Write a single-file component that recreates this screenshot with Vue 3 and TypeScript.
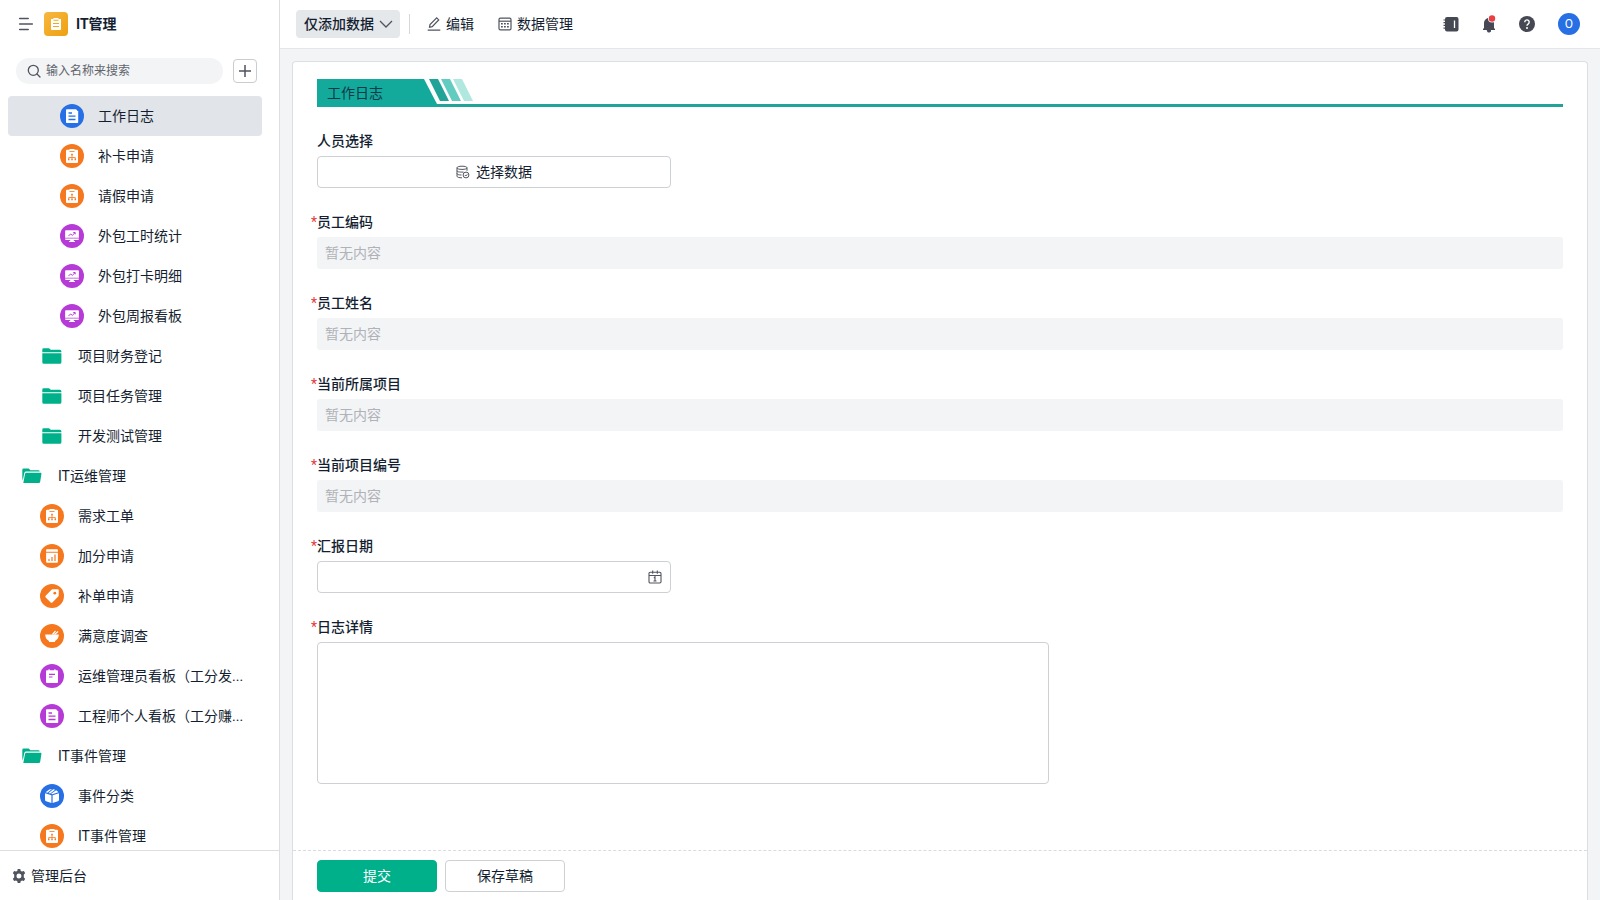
<script setup lang="ts">
import { ref } from 'vue'

interface NavItem {
  label: string
  icon: string
  tone: 'blue' | 'orange' | 'purple' | 'folder'
  level: 1 | 2 | 3
}

interface ReadonlyField {
  id: string
  label: string
}

const navItems: NavItem[] = [
  { label: '工作日志', icon: 'doc', tone: 'blue', level: 3 },
  { label: '补卡申请', icon: 'board', tone: 'orange', level: 3 },
  { label: '请假申请', icon: 'board', tone: 'orange', level: 3 },
  { label: '外包工时统计', icon: 'monitor', tone: 'purple', level: 3 },
  { label: '外包打卡明细', icon: 'monitor', tone: 'purple', level: 3 },
  { label: '外包周报看板', icon: 'monitor', tone: 'purple', level: 3 },
  { label: '项目财务登记', icon: 'folder', tone: 'folder', level: 2 },
  { label: '项目任务管理', icon: 'folder', tone: 'folder', level: 2 },
  { label: '开发测试管理', icon: 'folder', tone: 'folder', level: 2 },
  { label: 'IT运维管理', icon: 'folder-open', tone: 'folder', level: 1 },
  { label: '需求工单', icon: 'board', tone: 'orange', level: 2 },
  { label: '加分申请', icon: 'chart', tone: 'orange', level: 2 },
  { label: '补单申请', icon: 'tag', tone: 'orange', level: 2 },
  { label: '满意度调查', icon: 'bowl', tone: 'orange', level: 2 },
  { label: '运维管理员看板（工分发...', icon: 'note', tone: 'purple', level: 2 },
  { label: '工程师个人看板（工分赚...', icon: 'doc', tone: 'purple', level: 2 },
  { label: 'IT事件管理', icon: 'folder-open', tone: 'folder', level: 1 },
  { label: '事件分类', icon: 'box', tone: 'blue', level: 2 },
  { label: 'IT事件管理', icon: 'board', tone: 'orange', level: 2 },
]

const readonlyFields: ReadonlyField[] = [
  { id: 'employee-code', label: '员工编码' },
  { id: 'employee-name', label: '员工姓名' },
  { id: 'current-project', label: '当前所属项目' },
  { id: 'project-number', label: '当前项目编号' },
]

const activeIndex = ref(0)
const keyword = ref('')
const mode = ref('add')
const reportDate = ref('')
const detail = ref('')
</script>

<template>
  <div class="app">
    <svg class="sprite" aria-hidden="true">
      <symbol id="doc" viewBox="0 0 24 24">
        <path fill="#fff" d="M6.800 5.200h9.200L18.200 7.400v10.800a.8.800 0 0 1-.8.800H6.800a.8.800 0 0 1-.8-.800V6a.8.800 0 0 1 .8-.8z" />
        <path class="cut" d="M8.500 9h3.500M8.500 12.200h7M8.500 15.500h7" stroke-width="1.300" fill="none" />
      </symbol>
      <symbol id="board" viewBox="0 0 24 24">
        <path fill="#fff" d="M7 5.800h2.500V5h5v.8H17a1 1 0 0 1 1 1V18a1 1 0 0 1-1 1H7a1 1 0 0 1-1-1V6.800a1 1 0 0 1 1-1z" />
        <path class="cut" d="M9.500 7.500h5M12 10.500v3M8.700 15v-1.500h6.600V15M12 13.500V15" stroke-width="0.800" fill="none" />
        <path class="cut-fill" d="M11.200 9.700h1.600v1.600h-1.600zM8 14.700h1.500v1.500H8zM11.250 14.700h1.500v1.500h-1.500zM14.500 14.700H16v1.500h-1.500z" />
      </symbol>
      <symbol id="monitor" viewBox="0 0 24 24">
        <path fill="#fff" d="M6 6.200h12a.9.900 0 0 1 .9.900V13.800H5.100V7.100A.9.900 0 0 1 6 6.200zM5.100 14.600h13.800v.5a.9.900 0 0 1-.9.900h-4.200v1h1.200v1H9v-1h1.200v-1H6a.9.900 0 0 1-.9-.900z" />
        <path class="cut" d="M8.500 12l2-2 1.800 1.300L15 8.700M13.300 8.500h1.900v1.900" stroke-width="1" fill="none" />
      </symbol>
      <symbol id="chart" viewBox="0 0 24 24">
        <path fill="#fff" d="M7 5.200h10a.9.900 0 0 1 .9.900v1.600H6.100V6.100a.9.900 0 0 1 .9-.900zM6.100 8.700h11.800v9a1 1 0 0 1-1 1H7.100a1 1 0 0 1-1-1z" />
        <path class="cut" d="M9 15v2M12 13v4M15 10.500V17" stroke-width="1.200" fill="none" />
      </symbol>
      <symbol id="tag" viewBox="0 0 24 24">
        <path fill="#fff" d="M12.500 5.300l5-.1a1.200 1.200 0 0 1 1.300 1.300l-.1 5a1.500 1.500 0 0 1-.5 1.100l-5.800 5.800a1.200 1.200 0 0 1-1.700 0l-5-5a1.200 1.200 0 0 1 0-1.700l5.800-5.900a1.500 1.500 0 0 1 1-.500z" />
        <circle class="cut-fill" cx="14.800" cy="9.200" r="1.400" />
      </symbol>
      <symbol id="bowl" viewBox="0 0 24 24">
        <path fill="#fff" d="M5.200 10.500h13.600c0 3-1.300 5.200-3.800 6.500v1H9v-1c-2.500-1.300-3.800-3.500-3.800-6.500z" />
        <path stroke="#fff" d="M12.500 10.500l3-3.700M14.500 10.500l3.500-3" stroke-width="1.200" fill="none" />
      </symbol>
      <symbol id="note" viewBox="0 0 24 24">
        <path fill="#fff" d="M7 6.200h1.500V5.200h1.200v1h4.600v-1h1.200v1H17a1 1 0 0 1 1 1V18a1 1 0 0 1-1 1H7a1 1 0 0 1-1-1V7.200a1 1 0 0 1 1-1z" />
        <path class="cut" d="M9 10.300h6M9 13h3.500" stroke-width="1.200" fill="none" />
      </symbol>
      <symbol id="box" viewBox="0 0 24 24">
        <path fill="#fff" d="M5 9.300l6.400 1.900v7.800l-5.300-1.800A1.500 1.500 0 0 1 5 15.800zM19 9.300l-6.400 1.900v7.800l5.300-1.800a1.500 1.500 0 0 0 1.100-1.400zM5.600 8.200L9.300 5.500l2.700-.5-4.600 3.700zM13.200 5.200l2 .5-5 3.700-1.700-.4zM16.200 6.200l2.300 2L12.200 10.200l-1.100-.4z" />
      </symbol>
      <symbol id="folder" viewBox="0 0 20 16">
        <path fill="#00b08b" d="M1.700.2H7l1.700 1.600h9.100a1.600 1.600 0 0 1 1.600 1.600v.8H.3V1.600A1.400 1.400 0 0 1 1.700.2zM.3 5.200h19.100v9a1.500 1.500 0 0 1-1.500 1.500H1.800a1.500 1.500 0 0 1-1.500-1.500z" />
      </symbol>
      <symbol id="folder-open" viewBox="0 0 20 16">
        <path fill="#00b08b" d="M1.700.5h5L8.400 2.200h7.900a1.400 1.400 0 0 1 1.400 1.400H4.200a2 2 0 0 0-1.900 1.400L.8 12.400.3 10V1.900A1.400 1.400 0 0 1 1.700.5zM4.300 4.800h14.200a.9.900 0 0 1 .9 1.100l-1.200 7.800a1.500 1.500 0 0 1-1.500 1.300H1.300l1.700-9.100a1.400 1.400 0 0 1 1.300-1.100z" />
      </symbol>
    </svg>

    <aside class="sidebar">
      <div class="brand">
        <button class="plain" type="button" aria-label="收起菜单">
          <svg width="16" height="16" viewBox="0 0 16 16" fill="none" stroke="#50545f" stroke-width="1.600" stroke-linecap="round">
            <path d="M1.700 2.500h8.500M1.700 8h12.600M1.700 13.500h8.500" />
          </svg>
        </button>
        <span class="brand-icon">
          <svg width="24" height="24" viewBox="0 0 24 24">
            <path fill="#fff" d="M7 7h2.500V6h5v1H17v10.200a.8.800 0 0 1-.8.800H7.800a.8.800 0 0 1-.8-.800z" />
            <path d="M9.500 8.300h5M9 11.500h6M9 14.500h6" stroke="#f0a91f" stroke-width="1.100" />
          </svg>
        </span>
        <strong class="brand-name">IT管理</strong>
      </div>

      <div class="search-row">
        <label class="search">
          <svg width="14" height="14" viewBox="0 0 14 14" fill="none" stroke="#50545f" stroke-width="1.300" stroke-linecap="round">
            <circle cx="6.300" cy="6.300" r="5" />
            <path d="M10 10l3 3" />
          </svg>
          <input v-model="keyword" type="text" placeholder="输入名称来搜索" aria-label="输入名称来搜索" />
        </label>
        <button class="add" type="button" aria-label="新建">
          <svg width="14" height="14" viewBox="0 0 14 14" stroke="#50545f" stroke-width="1.500">
            <path d="M7 1v12M1 7h12" />
          </svg>
        </button>
      </div>

      <nav class="nav">
        <a
          v-for="(item, index) in navItems"
          :key="index"
          href="#"
          :class="['nav-item', `level-${item.level}`, { active: index === activeIndex }]"
          @click.prevent="activeIndex = index"
        >
          <span :class="['nav-icon', item.tone]">
            <svg><use :href="`#${item.icon}`" /></svg>
          </span>
          <span class="nav-label">{{ item.label }}</span>
        </a>
      </nav>

      <a class="admin" href="#">
        <svg width="14" height="14" viewBox="0 0 14 14">
          <path fill="#50545f" fill-rule="evenodd" d="M5.700 0h2.600l.4 1.900 1.300.7 1.900-.600 1.300 2.200-1.400 1.300v2.900l1.400 1.400-1.300 2.200-1.900-.600-1.300.8-.4 1.800H5.700l-.4-1.800-1.300-.8-1.900.6L.8 9.800l1.400-1.400V5.500L.8 4.200 2.100 2l1.900.6 1.300-.700zM7 4.500a2.500 2.500 0 1 0 0 5 2.500 2.500 0 0 0 0-5z" />
        </svg>
        <span>管理后台</span>
      </a>
    </aside>

    <div class="content">
      <header class="topbar">
        <div class="mode">
          <select v-model="mode" aria-label="数据权限">
            <option value="add">仅添加数据</option>
          </select>
          <svg width="14" height="8" viewBox="0 0 14 8" fill="none" stroke="#50545f" stroke-width="1.300">
            <path d="M1 1l6 6 6-6" />
          </svg>
        </div>
        <span class="divider"></span>
        <button class="tool" type="button">
          <svg width="14" height="14" viewBox="0 0 14 14" fill="none" stroke="#50545f" stroke-width="1.200">
            <path d="M2.500 10.300l.5-2.800L9.700.9l2 2L5.200 9.700zM.7 13.200h12.600" />
          </svg>
          编辑
        </button>
        <button class="tool" type="button">
          <svg width="14" height="14" viewBox="0 0 14 14" fill="none" stroke="#50545f" stroke-width="1.200">
            <rect x="1" y="1.100" width="12" height="11.800" rx="1.400" />
            <path d="M1 4.200h12" />
            <path d="M3 6.800h8M3 9.800h8" stroke-width="1.500" stroke-dasharray="1.800 1.200" />
          </svg>
          数据管理
        </button>
        <div class="actions">
          <button class="plain" type="button" aria-label="通讯录">
            <svg width="16" height="16" viewBox="0 0 16 16">
              <rect x="2" y="1" width="13.500" height="14.500" rx="2" fill="#464953" />
              <path d="M.5 4h3M.5 6.700h3M.5 9.400h3M.5 12.100h3" stroke="#464953" stroke-width="1.200" />
              <path d="M11.500 4.500v7.500" stroke="#fff" stroke-width="1.300" />
            </svg>
          </button>
          <button class="plain" type="button" aria-label="通知">
            <svg width="16" height="18" viewBox="0 0 16 18">
              <path fill="#464953" d="M2 14.500V14l1-1V8a5 5 0 0 1 10 0v5l1 1v1H10a2 2 0 0 1-4 1l-.3-1H2z" />
              <circle cx="11" cy="3.500" r="4" fill="#fff" />
              <circle cx="11" cy="3.500" r="3.200" fill="#e83f43" />
            </svg>
          </button>
          <button class="plain" type="button" aria-label="帮助">
            <svg width="16" height="16" viewBox="0 0 16 16">
              <circle cx="8" cy="8" r="8" fill="#464953" />
              <path d="M5.800 6.200a2.200 2.200 0 1 1 3.500 1.700c-.8.600-1.300.9-1.300 1.900" fill="none" stroke="#fff" stroke-width="1.400" />
              <circle cx="8" cy="12" r="1" fill="#fff" />
            </svg>
          </button>
          <button class="avatar" type="button">O</button>
        </div>
      </header>

      <main class="page">
        <form class="card" @submit.prevent>
          <div class="fields">
            <h1 class="banner">
              <svg class="banner-shape" width="156" height="28" viewBox="0 0 156 28" aria-hidden="true">
                <path fill="#13aa9b" d="M0 0h107l13 25v3H0z" />
                <path fill="#21a497" d="M112 0h9l11 22h-9z" />
                <path fill="#62ccc0" d="M124 0h9l11 22h-9z" />
                <path fill="#b0e7df" d="M136 0h9l11 22h-9z" />
              </svg>
              <span class="banner-text">工作日志</span>
            </h1>

            <div class="field">
              <span id="person-label" class="label">人员选择</span>
              <button class="picker" type="button" aria-describedby="person-label">
                <svg width="14" height="14" viewBox="0 0 14 14" fill="none" stroke="#50545f" stroke-width="1">
                  <path d="M1 2.800C1 1.800 3 1.200 6 1.200s5 .6 5 1.600-2 1.600-5 1.600-5-.6-5-1.600zM1 2.800v8.400c0 1 2 1.600 5 1.600M11 2.800v3M1 5.700c0 1 2 1.500 6.500 1.400M1 8.500c0 1 2 1.500 4.500 1.500" />
                  <circle cx="10" cy="10" r="2.900" />
                  <path d="M8.800 10l1 1 1.500-1.700" />
                </svg>
                选择数据
              </button>
            </div>

            <div v-for="field in readonlyFields" :key="field.id" class="field">
              <label class="label required" :for="field.id">{{ field.label }}</label>
              <input :id="field.id" class="empty" type="text" placeholder="暂无内容" readonly />
            </div>

            <div class="field">
              <label class="label required" for="report-date">汇报日期</label>
              <div class="date">
                <input id="report-date" v-model="reportDate" type="text" />
                <svg width="14" height="14" viewBox="0 0 14 14" fill="none" stroke="#50545f" stroke-width="1.100">
                  <rect x="1" y="2.200" width="12" height="10.800" rx="1.200" />
                  <path d="M1 5.500h12M4.700.6v3.200M9.300.6v3.200M5.700 7.700H7v3.300M5.500 11h3M7 5.500v2" />
                </svg>
              </div>
            </div>

            <div class="field">
              <label class="label required" for="detail">日志详情</label>
              <textarea id="detail" v-model="detail"></textarea>
            </div>
          </div>

          <footer class="footer">
            <button class="btn primary" type="submit">提交</button>
            <button class="btn" type="button">保存草稿</button>
          </footer>
        </form>
      </main>
    </div>
  </div>
</template>

<style>
body {
  margin: 0;
}
</style>

<style scoped>
.app,
.app * {
  box-sizing: border-box;
}

.app {
  display: flex;
  height: 100vh;
  overflow: hidden;
  background: #fff;
  color: #141e31;
  font-family: Roboto, 'Noto Sans CJK SC', sans-serif;
  font-size: 14px;
  line-height: 22px;
}

.sprite {
  display: none;
}

svg {
  display: block;
  flex: none;
}

button,
input,
select,
textarea {
  margin: 0;
  color: inherit;
  font: inherit;
  outline: none;
}

button {
  cursor: pointer;
}

a {
  color: inherit;
  text-decoration: none;
}

.plain {
  padding: 0;
  border: 0;
  background: none;
}

.sidebar {
  display: flex;
  flex: none;
  flex-direction: column;
  width: 280px;
  border-right: 1px solid #dcdee2;
}

.brand {
  display: flex;
  align-items: center;
  height: 48px;
  padding-left: 18px;
}

.brand-icon {
  margin: 0 8px 0 10px;
  border-radius: 4px;
  background: linear-gradient(135deg, #f8b83e, #eda012);
}

.brand-name {
  font-weight: 700;
}

.search-row {
  display: flex;
  align-items: center;
  gap: 10px;
  padding: 10px 22px 12px 16px;
}

.search {
  display: flex;
  flex: 1;
  align-items: center;
  gap: 5px;
  height: 26px;
  padding: 0 12px 0 11px;
  border-radius: 13px;
  background: #f3f4f5;
}

.search input {
  flex: 1;
  min-width: 0;
  height: 20px;
  padding: 0;
  border: 0;
  background: none;
  font-size: 12px;
}

.search input::placeholder {
  color: #60646d;
}

.add {
  display: flex;
  align-items: center;
  justify-content: center;
  width: 24px;
  height: 24px;
  padding: 0;
  border: 1px solid #caccd0;
  border-radius: 4px;
  background: #fff;
}

.nav {
  flex: 1;
  min-height: 0;
  overflow: hidden;
  padding: 0 17px 0 8px;
}

.nav-item {
  display: flex;
  align-items: center;
  gap: 14px;
  height: 40px;
  padding-right: 8px;
  border-radius: 4px;
}

.nav-item.active {
  background: #e1e4e8;
}

.level-1 {
  padding-left: 12px;
}

.level-2 {
  padding-left: 32px;
}

.level-3 {
  padding-left: 52px;
}

.nav-icon {
  display: flex;
  flex: none;
  align-items: center;
  justify-content: center;
  width: 24px;
  height: 24px;
  border-radius: 50%;
}

.nav-icon svg {
  width: 24px;
  height: 24px;
}

.nav-icon.folder svg {
  width: 20px;
  height: 16px;
}

.blue {
  background: #276fe5;
  color: #276fe5;
}

.orange {
  background: #f5781f;
  color: #f5781f;
}

.purple {
  background: #b63bd6;
  color: #b63bd6;
}

.cut {
  stroke: currentColor;
}

.cut-fill {
  fill: currentColor;
}

.nav-label {
  overflow: hidden;
  text-overflow: ellipsis;
  white-space: nowrap;
}

.admin {
  display: flex;
  align-items: center;
  gap: 5px;
  height: 50px;
  padding-left: 12px;
  border-top: 1px solid #dcdee2;
}

.content {
  display: flex;
  flex: 1;
  flex-direction: column;
  min-width: 0;
}

.topbar {
  display: flex;
  flex: none;
  align-items: center;
  height: 49px;
  padding: 0 20px 0 16px;
  border-bottom: 1px solid #e4e6e9;
}

.mode {
  position: relative;
  display: flex;
  align-items: center;
}

.mode select {
  height: 28px;
  padding: 0 26px 0 8px;
  border: 0;
  border-radius: 4px;
  background: #e5e8eb;
  font-weight: 500;
  appearance: none;
}

.mode svg {
  position: absolute;
  right: 7px;
  pointer-events: none;
}

.divider {
  width: 1px;
  height: 20px;
  margin: 0 17px 0 9px;
  background: #d5d7db;
}

.tool {
  display: flex;
  align-items: center;
  gap: 5px;
  margin-right: 24px;
  padding: 0;
  border: 0;
  background: none;
}

.actions {
  display: flex;
  align-items: center;
  gap: 22px;
  margin-left: auto;
}

.avatar {
  width: 22px;
  height: 22px;
  margin-left: 1px;
  padding: 0;
  border: 0;
  border-radius: 50%;
  background: #276fe5;
  color: #fff;
  font-size: 12px;
  line-height: 22px;
}

.page {
  display: flex;
  flex: 1;
  min-height: 0;
  padding: 12px 12px 0;
  background: #f3f4f6;
}

.card {
  display: flex;
  flex: 1;
  flex-direction: column;
  min-width: 0;
  border: 1px solid #dcdfe2;
  border-bottom: 0;
  border-radius: 4px 4px 0 0;
  background: #fff;
}

.fields {
  display: flex;
  flex: 1;
  flex-direction: column;
  gap: 23px;
  min-height: 0;
  padding: 17px 24px 0;
  overflow: hidden;
}

.banner {
  position: relative;
  flex: none;
  height: 28px;
  margin: 0;
  border-bottom: 3px solid #21a497;
  font-size: 14px;
  font-weight: 400;
  line-height: 28px;
}

.banner-shape {
  position: absolute;
  top: 0;
  left: 0;
}

.banner-text {
  position: relative;
  padding-left: 10px;
  color: #0c3a4a;
}

.field {
  display: flex;
  flex-direction: column;
  gap: 4px;
}

.label {
  position: relative;
  font-weight: 500;
}

.required::before {
  position: absolute;
  right: 100%;
  color: #e4393c;
  font-weight: 400;
  content: '*';
}

.picker,
.date {
  display: flex;
  align-items: center;
  width: 100%;
  max-width: 354px;
  height: 32px;
  border: 1px solid #cdd0d4;
  border-radius: 4px;
  background: #fff;
}

.picker {
  justify-content: center;
  gap: 6px;
  padding: 0;
}

.empty {
  width: 100%;
  height: 32px;
  padding: 0 8px;
  border: 0;
  border-radius: 3px;
  background: #f3f4f6;
}

.empty::placeholder {
  color: #afb2b7;
}

.date {
  padding: 0 8px;
}

.date input {
  flex: 1;
  min-width: 0;
  padding: 0;
  border: 0;
  background: none;
}

textarea {
  width: 100%;
  max-width: 732px;
  height: 142px;
  padding: 4px 8px;
  border: 1px solid #cdd0d4;
  border-radius: 4px;
  resize: none;
}

.footer {
  display: flex;
  flex: none;
  gap: 8px;
  height: 50px;
  padding: 9px 24px 0;
  border-top: 1px dashed #d9dbde;
}

.btn {
  width: 120px;
  height: 32px;
  padding: 0;
  border: 1px solid #cdd0d4;
  border-radius: 4px;
  background: #fff;
}

.btn.primary {
  border-color: #00b08b;
  background: #00b08b;
  color: #fff;
}
</style>
